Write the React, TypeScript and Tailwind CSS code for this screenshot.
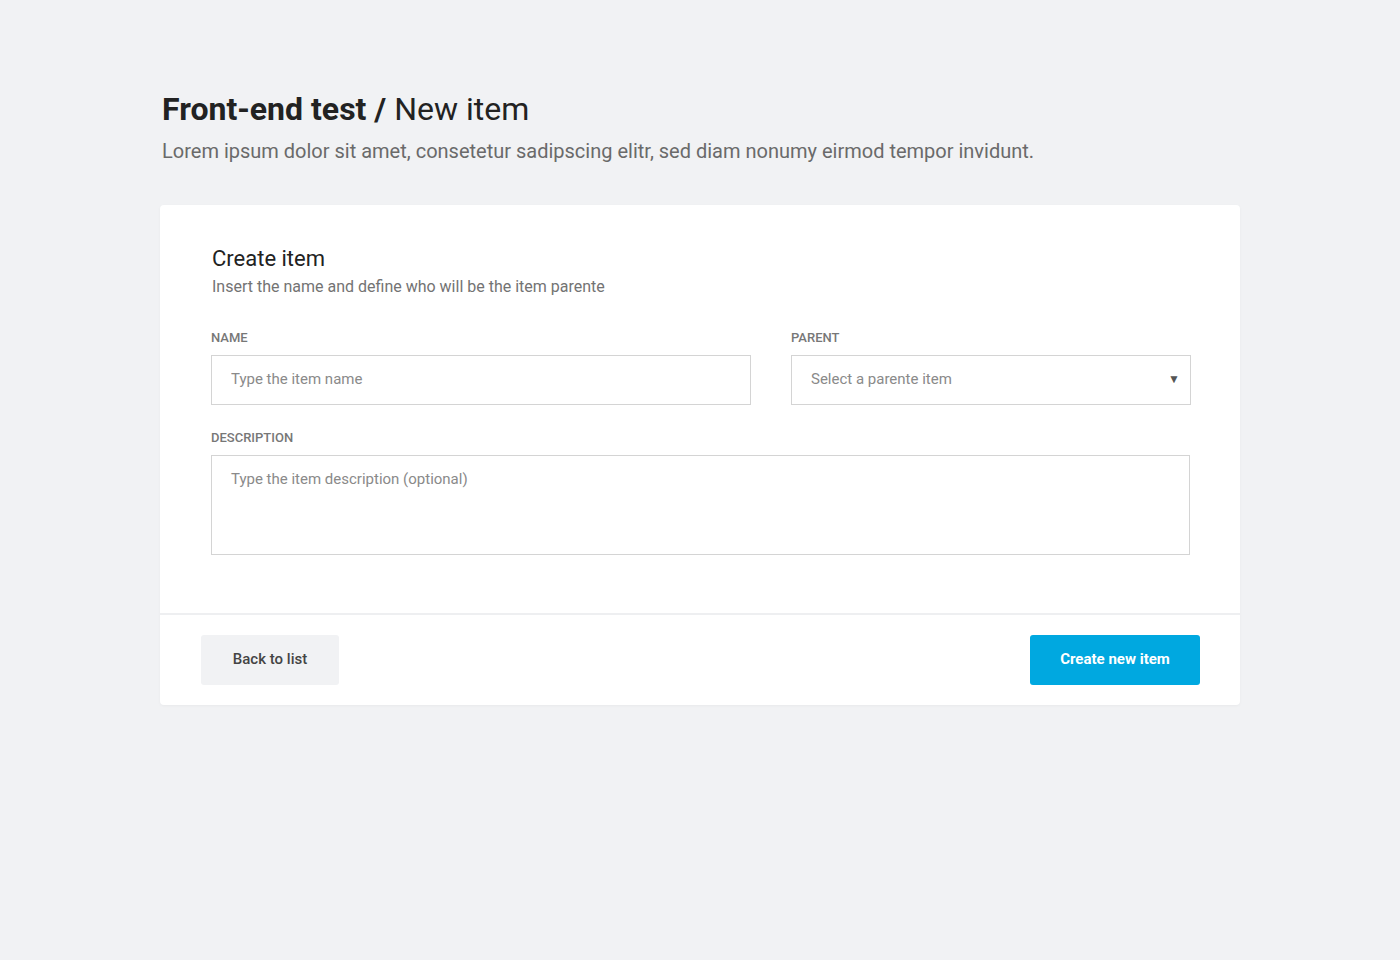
export default function App() {
    return (
        <div className="min-h-screen bg-[#f1f2f4] font-['Roboto',sans-serif] text-[#222]">
            <div className="w-[1080px] mx-auto pt-[89px]">
                {/* Page header */}
                <div className="px-[2px]">
                    <h1 className="text-[32px] leading-[40px] text-[#222]">
                        <span className="font-bold">Front-end test /</span> New item
                    </h1>
                    <p className="mt-[8px] text-[20px] leading-[28px] text-[#6a6a6a]">
                        Lorem ipsum dolor sit amet, consetetur sadipscing elitr, sed diam nonumy eirmod tempor invidunt.
                    </p>
                </div>

                {/* Form card */}
                <div className="mt-[40px] bg-white rounded-[4px] shadow-[0_1px_3px_rgba(0,0,0,0.04)]">
                    <div className="pt-[40px] pb-[58px] pl-[51px] pr-[49px]">
                        <div className="pl-[1px]">
                            <h2 className="text-[22px] leading-[28px] text-[#222]">Create item</h2>
                            <p className="mt-[3px] text-[16px] leading-[22px] text-[#737373]">
                                Insert the name and define who will be the item parente
                            </p>
                        </div>

                        <div className="mt-[31px] flex gap-[40px]">
                            <div className="w-[540px]">
                                <label className="block text-[13px] leading-[18px] font-medium uppercase text-[#777]">Name</label>
                                <input
                                    className="mt-[8px] w-full h-[50px] px-[19px] pb-[2px] border border-[#d4d4d4] text-[15px] text-[#444] placeholder:text-[#8a8a8a] outline-none"
                                    placeholder="Type the item name"
                                />
                            </div>
                            <div className="w-[400px]">
                                <label className="block text-[13px] leading-[18px] font-medium uppercase text-[#777]">Parent</label>
                                <div className="mt-[8px] relative h-[50px] border border-[#d4d4d4] flex items-center px-[19px] pb-[2px] text-[15px] text-[#8a8a8a]">
                                    Select a parente item
                                    <span className="absolute right-[10px] top-[14px] text-[12px] text-[#555]">▼</span>
                                </div>
                            </div>
                        </div>

                        <div className="mt-[24px]">
                            <label className="block text-[13px] leading-[18px] font-medium uppercase text-[#777]">Description</label>
                            <textarea
                                className="mt-[8px] block w-[979px] h-[100px] px-[19px] py-[12px] border border-[#d4d4d4] text-[15px] leading-[22px] text-[#444] placeholder:text-[#8a8a8a] outline-none resize-none"
                                placeholder="Type the item description (optional)"
                            />
                        </div>
                    </div>

                    {/* Footer actions */}
                    <div className="border-t-2 border-[#eeeff1] pl-[41px] pr-[40px] py-[20px] flex justify-between">
                        <button className="w-[138px] h-[50px] pb-[2px] rounded-[3px] bg-[#f1f2f4] text-[15px] font-medium text-[#444]">
                            Back to list
                        </button>
                        <button className="w-[170px] h-[50px] pb-[2px] rounded-[3px] bg-[#00a8e0] text-[15px] font-bold text-white">
                            Create new item
                        </button>
                    </div>
                </div>
            </div>
        </div>
    );
}
